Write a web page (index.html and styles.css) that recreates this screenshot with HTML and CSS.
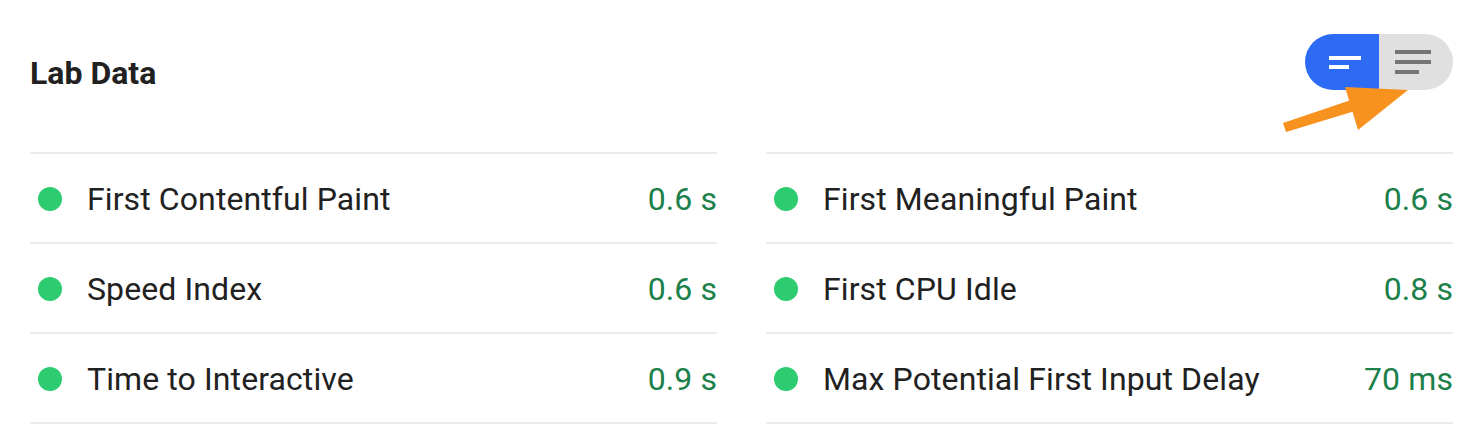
FILE: index.html
```html
<!DOCTYPE html>
<html lang="en">
<head>
    <meta charset="UTF-8">
    <title>Lab Data</title>
    <link rel="stylesheet" href="styles.css">
</head>
<body>

    <div class="lab">
        <div class="lab_header">
            <h2 class="lab_title">Lab Data</h2>

            <div class="toggle">
                <button class="toggle_btn toggle_active" aria-label="Summary view">
                    <svg width="74" height="56" viewBox="0 0 74 56">
                        <rect x="24" y="22" width="32" height="4" fill="#fff"/>
                        <rect x="24" y="31" width="20" height="4" fill="#fff"/>
                    </svg>
                </button>
                <button class="toggle_btn" aria-label="Detailed view">
                    <svg width="74" height="56" viewBox="0 0 74 56">
                        <rect x="16" y="16" width="36" height="4" fill="#757575"/>
                        <rect x="16" y="26" width="36" height="4" fill="#757575"/>
                        <rect x="16" y="36" width="24" height="4" fill="#757575"/>
                    </svg>
                </button>
            </div>

            <!-- arrow pointing at the detailed view button -->
            <svg class="pointer" width="140" height="60" viewBox="0 0 140 60">
                <polygon points="0,43 3,52 72,31 68,20" fill="#f7921e"/>
                <polygon points="62,7 125,10 75,50" fill="#f7921e"/>
            </svg>
        </div>

        <div class="metrics">
            <ul class="metric_list">
                <li class="metric">
                    <span class="dot"></span>
                    <span class="metric_name">First Contentful Paint</span>
                    <span class="metric_value">0.6 s</span>
                </li>
                <li class="metric">
                    <span class="dot"></span>
                    <span class="metric_name">Speed Index</span>
                    <span class="metric_value">0.6 s</span>
                </li>
                <li class="metric">
                    <span class="dot"></span>
                    <span class="metric_name">Time to Interactive</span>
                    <span class="metric_value">0.9 s</span>
                </li>
            </ul>

            <ul class="metric_list">
                <li class="metric">
                    <span class="dot"></span>
                    <span class="metric_name">First Meaningful Paint</span>
                    <span class="metric_value">0.6 s</span>
                </li>
                <li class="metric">
                    <span class="dot"></span>
                    <span class="metric_name">First CPU Idle</span>
                    <span class="metric_value">0.8 s</span>
                </li>
                <li class="metric">
                    <span class="dot"></span>
                    <span class="metric_name">Max Potential First Input Delay</span>
                    <span class="metric_value">70 ms</span>
                </li>
            </ul>
        </div>
    </div>

</body>
</html>
```

FILE: styles.css
```css
body {
    margin: 0;
    background: #fff;
    font-family: Roboto, 'Liberation Sans', sans-serif;
    color: #212121;
}

.lab {
    padding: 0 29px 0 30px;
}

.lab_header {
    position: relative;
    height: 152px;
    display: flex;
    justify-content: space-between;
    align-items: flex-start;
    padding-top: 34px;
    box-sizing: border-box;
}

.lab_title {
    margin: 21px 0 0;
    font-size: 32px;
    line-height: 36px;
    font-weight: 700;
}

.toggle {
    display: flex;
    height: 56px;
    border-radius: 28px;
    overflow: hidden;
}

.toggle_btn {
    width: 74px;
    height: 56px;
    padding: 0;
    border: none;
    background: #e0e0e0;
    cursor: pointer;
}

.toggle_btn svg {
    display: block;
}

.toggle_active {
    background: #2e6bf5;
}

.pointer {
    position: absolute;
    left: 1253px;
    top: 80px;
}

.metrics {
    display: grid;
    grid-template-columns: 1fr 1fr;
    column-gap: 49px;
}

.metric_list {
    list-style: none;
    margin: 0;
    padding: 0;
    border-top: 2px solid #ebebeb;
}

.metric {
    display: flex;
    align-items: center;
    height: 90px;
    padding-top: 1px;
    box-sizing: border-box;
    border-bottom: 2px solid #ebebeb;
    font-size: 32px;
    line-height: 40px;
    letter-spacing: 0.1px;
}

.dot {
    width: 24px;
    height: 24px;
    margin: 0 25px 0 8px;
    border-radius: 50%;
    background: #2ecc71;
    flex-shrink: 0;
}

.metric_name {
    flex: 1;
}

.metric_value {
    color: #1b8049;
}
```
